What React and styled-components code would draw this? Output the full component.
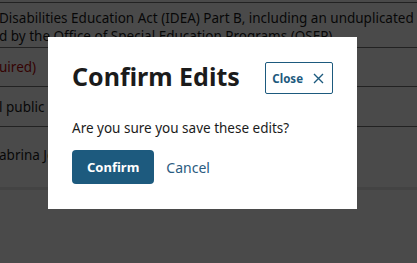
import React from "react"
import styled, { createGlobalStyle } from "styled-components"

const Global = createGlobalStyle`
  html, body {
    margin: 0;
    padding: 0;
    background: #fff;
    font-family: "Noto Sans", "Liberation Sans", sans-serif;
    color: #1b1b1b;
  }
  * { box-sizing: border-box; }
`

const Page = styled.div`
  width: 417px;
  height: 263px;
  overflow: hidden;
  background: #fff;
`

const Table = styled.div`
  margin-top: 2px;
  border-bottom: 3px solid #e6e6e6;
`

const Row = styled.div`
  display: flex;
  align-items: ${(p) => (p.$pt ? "flex-start" : "center")};
  height: ${(p) => p.$h}px;
  padding-top: ${(p) => p.$pt || 0}px;
  border-top: 1px solid #767676;
  font-size: 13.5px;
  line-height: 18px;
  white-space: nowrap;
  color: ${(p) => (p.$error ? "#b50909" : "#1b1b1b")};
`

const Cell = styled.div`
  margin-left: -1px;
`

const Overlay = styled.div`
  position: fixed;
  inset: 0;
  background: rgba(0, 0, 0, 0.71);
  display: flex;
  align-items: flex-start;
  padding: 37px 0 0 48px;
`

const Modal = styled.div`
  width: 309px;
  height: 172px;
  background: #fff;
  padding: 25px 24px;
  display: flex;
  flex-direction: column;
`

const Header = styled.div`
  display: flex;
  justify-content: space-between;
  align-items: flex-start;
`

const Title = styled.h2`
  margin: 0;
  font-size: 25px;
  line-height: 28px;
  font-weight: 700;
  color: #1b1b1b;
`

const CloseButton = styled.button`
  display: flex;
  align-items: center;
  gap: 10px;
  height: 32px;
  padding: 0 8px 0 6px;
  background: #fff;
  border: 1px solid #1d5a7e;
  border-radius: 2px;
  color: #1d5a7e;
  font-family: inherit;
  font-size: 11.5px;
  font-weight: 700;
  cursor: pointer;
`

const Body = styled.p`
  margin: 24px 0 0;
  font-size: 13.5px;
  line-height: 20px;
  color: #1b1b1b;
`

const Actions = styled.div`
  display: flex;
  align-items: center;
  gap: 12px;
  margin-top: 12px;
`

const Primary = styled.button`
  height: 34px;
  padding: 0 15px;
  border: none;
  border-radius: 4px;
  background: #1d5a7e;
  color: #fff;
  font-family: inherit;
  font-size: 13px;
  font-weight: 700;
  cursor: pointer;
`

const Link = styled.button`
  background: none;
  border: none;
  padding: 0;
  color: #2b5b80;
  font-family: inherit;
  font-size: 14px;
  cursor: pointer;
`

const XIcon = () => (
  <svg width="11" height="11" viewBox="0 0 11 11" fill="none">
    <path d="M1 1L10 10M10 1L1 10" stroke="currentColor" strokeWidth="1.4" />
  </svg>
)

export default function App() {
  return (
    <Page>
      <Global />
      <Table>
        <Row $h={45} $pt={6}>
          <Cell>
            Disabilities Education Act (IDEA) Part B, including an unduplicated count of children
            <br />
            d by the Office of Special Education Programs (OSEP).
          </Cell>
        </Row>
        <Row $h={39} $error>
          <Cell>uired)</Cell>
        </Row>
        <Row $h={40}>
          <Cell>l public agencies</Cell>
        </Row>
        <Row $h={61} $pt={18.5}>
          <Cell>abrina Jones</Cell>
        </Row>
      </Table>
      <Overlay>
        <Modal role="dialog" aria-modal="true">
          <Header>
            <Title>Confirm Edits</Title>
            <CloseButton>
              Close
              <XIcon />
            </CloseButton>
          </Header>
          <Body>Are you sure you save these edits?</Body>
          <Actions>
            <Primary>Confirm</Primary>
            <Link>Cancel</Link>
          </Actions>
        </Modal>
      </Overlay>
    </Page>
  )
}
